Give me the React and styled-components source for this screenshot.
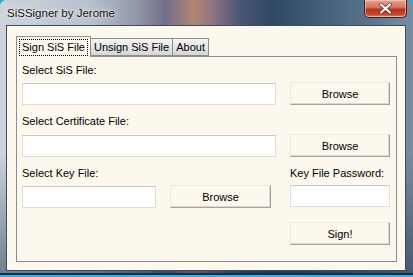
import React, { useState } from 'react';
import styled, { createGlobalStyle } from 'styled-components';

const GlobalStyle = createGlobalStyle`
  html, body {
    margin: 0;
    padding: 0;
    background: #2aa9e0;
  }
  * {
    box-sizing: border-box;
  }
`;

const Window = styled.div`
  width: 413px;
  height: 277px;
  display: flex;
  flex-direction: column;
  border-radius: 6px 6px 0 0;
  overflow: hidden;
  background:
    linear-gradient(0deg, #2eb2e8 0px, #2eb2e8 2px, #1c2c44 2px, #1c2c44 4px, rgba(0, 0, 0, 0) 4px),
    linear-gradient(180deg, rgba(0, 0, 0, 0) 55%, rgba(20, 36, 60, 0.5) 100%),
    linear-gradient(90deg, #cdd4dc 0%, #b7c1cc 22%, #8f93a6 34%, #6f6f88 40%, #b38474 47%, #8a7180 52%, #4a5775 58%, #2e4866 66%, #45607c 78%, #5c748c 90%, #7a8ea2 100%);
  font-family: 'Liberation Sans', Arial, sans-serif;
`;

const TitleBar = styled.div`
  height: 25px;
  flex: none;
  display: flex;
  align-items: flex-start;
  padding-left: 7px;
`;

const Title = styled.span`
  font-family: 'Liberation Sans', Arial, sans-serif;
  font-size: 11.5px;
  line-height: 13px;
  margin-top: 7px;
  color: #111;
  text-shadow: 0 0 6px rgba(255, 255, 255, 0.9), 0 0 2px rgba(255, 255, 255, 0.8);
`;

const CloseButton = styled.div`
  margin-left: auto;
  margin-right: 6px;
  width: 43px;
  height: 18px;
  border: 1px solid #4a1f1a;
  border-top: none;
  border-radius: 0 0 5px 5px;
  background: linear-gradient(180deg, #e6a492 0%, #d4705a 45%, #b3321c 55%, #c8482c 85%, #e0866a 100%);
  box-shadow: inset 0 0 0 1px rgba(255, 220, 210, 0.55);
  display: flex;
  align-items: center;
  justify-content: center;
`;

const Client = styled.div`
  flex: 1;
  margin: 0 7px 6px 6px;
  border: 1px solid #3c4c5e;
  background: #fdf8ee;
  padding: 10px 8px 8px 9px;
  display: flex;
  flex-direction: column;
`;

const TabStrip = styled.div`
  display: flex;
  align-items: flex-end;
  height: 20px;
  position: relative;
  z-index: 1;
`;

const Tab = styled.div`
  height: ${(p) => (p.$active ? '21px' : '18px')};
  margin-bottom: ${(p) => (p.$active ? '-1px' : '0')};
  padding: 0 ${(p) => (p.$active ? '2px' : '3px')};
  border: 1px solid #8c8e94;
  border-bottom: ${(p) => (p.$active ? 'none' : '1px solid #8c8e94')};
  border-left: ${(p) => (p.$first || p.$active ? '1px solid #8c8e94' : 'none')};
  background: ${(p) => (p.$active ? '#fdf8ee' : 'linear-gradient(180deg, #f4f4f4 0%, #e6e6e6 50%, #d6d6d6 100%)')};
  font-size: 11px;
  color: #000;
  display: flex;
  align-items: ${(p) => (p.$active ? 'flex-start' : 'center')};
  padding-top: ${(p) => (p.$active ? '2px' : '0')};
  cursor: default;
`;

const FocusText = styled.span`
  border: 1px dotted #000;
  padding: 1px 2px;
  line-height: 13px;
`;

const Panel = styled.div`
  flex: 1;
  border: 1px solid #8c8e94;
  background: #fdf8ee;
  padding: 7px 6px 0 5px;
  display: flex;
  flex-direction: column;
`;

const Label = styled.div`
  font-size: 11px;
  line-height: 13px;
  color: #000;
  margin-top: ${(p) => p.$top || 0}px;
  white-space: nowrap;
`;

const Row = styled.div`
  display: flex;
  align-items: center;
  margin-top: ${(p) => p.$top || 0}px;
`;

const Input = styled.input`
  width: ${(p) => p.$w}px;
  height: 22px;
  border: 1px solid #dcdcdc;
  border-top-color: #c6c6c6;
  background: #fff;
  font-family: 'Liberation Sans', Arial, sans-serif;
  font-size: 11px;
  padding: 0 3px;
  outline: none;
`;

const Button = styled.button`
  width: ${(p) => p.$w || 100}px;
  height: 23px;
  margin-left: ${(p) => p.$left || 0}px;
  margin-top: ${(p) => p.$top || 0}px;
  background: #fcf8ee;
  border: 1px solid #ece8de;
  border-right-color: #9e9e9e;
  border-bottom-color: #a4a4a4;
  box-shadow: inset -1px -1px 0 #ddd8cd;
  font-family: 'Liberation Sans', Arial, sans-serif;
  font-size: 11px;
  color: #000;
  padding: 0;
  cursor: pointer;
`;

const BottomArea = styled.div`
  display: flex;
  justify-content: space-between;
  margin-top: 10px;
`;

const Column = styled.div`
  display: flex;
  flex-direction: column;
  width: ${(p) => (p.$w ? `${p.$w}px` : 'auto')};
`;

function CloseIcon() {
  return (
    <svg width="13" height="11" viewBox="0 0 13 11">
      <path d="M2 1.5 L11 9.5 M11 1.5 L2 9.5" stroke="#5a2a22" strokeWidth="3.6" strokeLinecap="round" />
      <path d="M2 1.5 L11 9.5 M11 1.5 L2 9.5" stroke="#ffffff" strokeWidth="2.2" strokeLinecap="round" />
    </svg>
  );
}

export default function App() {
  const [tab, setTab] = useState(0);
  const tabs = ['Sign SiS File', 'Unsign SiS File', 'About'];

  return (
    <>
      <GlobalStyle />
      <Window>
        <TitleBar>
          <Title>SiSSigner by Jerome</Title>
          <CloseButton>
            <CloseIcon />
          </CloseButton>
        </TitleBar>
        <Client>
          <TabStrip>
            {tabs.map((t, i) => (
              <Tab key={t} $active={tab === i} $first={i === 0} onClick={() => setTab(i)}>
                {tab === i ? <FocusText>{t}</FocusText> : t}
              </Tab>
            ))}
          </TabStrip>
          <Panel>
            <Label>Select SiS File:</Label>
            <Row $top={5}>
              <Input $w={254} />
              <Button $left={14}>Browse</Button>
            </Row>
            <Label $top={10}>Select Certificate File:</Label>
            <Row $top={6}>
              <Input $w={254} />
              <Button $left={14}>Browse</Button>
            </Row>
            <BottomArea>
              <Column>
                <Label>Select Key File:</Label>
                <Row $top={5}>
                  <Input $w={134} />
                  <Button $left={14} $w={101}>Browse</Button>
                </Row>
              </Column>
              <Column $w={100}>
                <Label>Key File Password:</Label>
                <Row $top={5}>
                  <Input $w={100} type="password" />
                </Row>
                <Button $top={15}>Sign!</Button>
              </Column>
            </BottomArea>
          </Panel>
        </Client>
      </Window>
    </>
  );
}
